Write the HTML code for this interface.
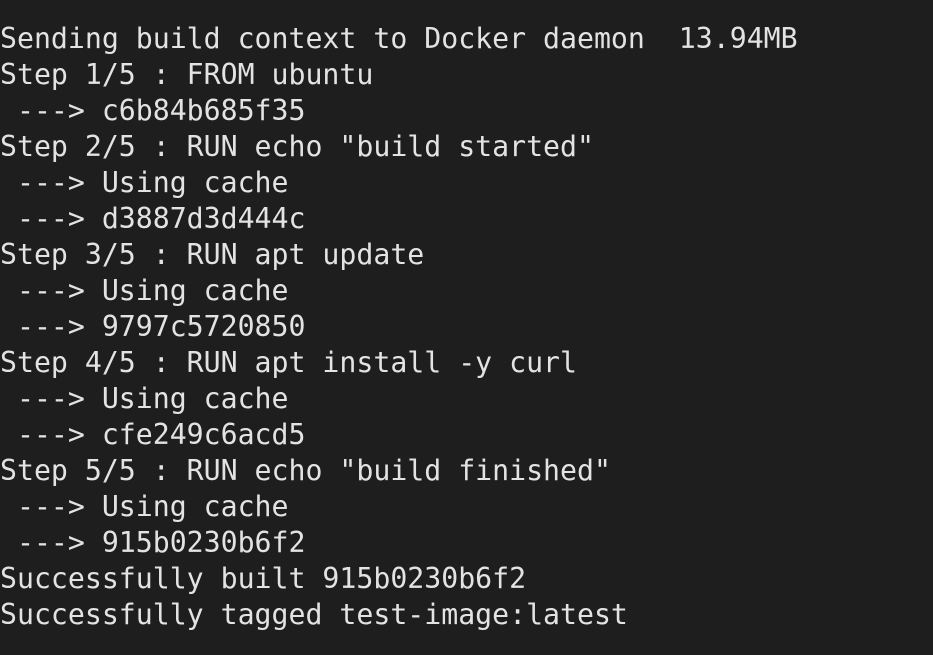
<!DOCTYPE html>
<html><head><style>
html,body{margin:0;padding:0;background:#1e1e1e;width:933px;height:655px;overflow:hidden}
pre{margin:0;padding:21px 0 0 0;font-family:"DejaVu Sans Mono","Liberation Mono",monospace;font-size:28.2px;line-height:36px;color:#e3e3e3;white-space:pre}
</style></head><body><pre>Sending build context to Docker daemon  13.94MB
Step 1/5 : FROM ubuntu
 ---&gt; c6b84b685f35
Step 2/5 : RUN echo "build started"
 ---&gt; Using cache
 ---&gt; d3887d3d444c
Step 3/5 : RUN apt update
 ---&gt; Using cache
 ---&gt; 9797c5720850
Step 4/5 : RUN apt install -y curl
 ---&gt; Using cache
 ---&gt; cfe249c6acd5
Step 5/5 : RUN echo "build finished"
 ---&gt; Using cache
 ---&gt; 915b0230b6f2
Successfully built 915b0230b6f2
Successfully tagged test-image:latest</pre></body></html>
